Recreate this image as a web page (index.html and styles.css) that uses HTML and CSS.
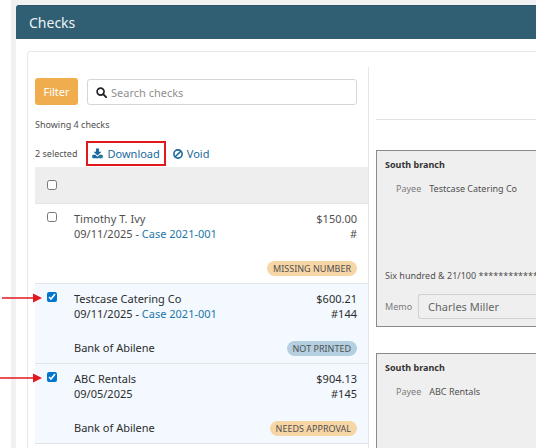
FILE: index.html
```html
<!DOCTYPE html>
<html lang="en">

<head>
    <meta charset="UTF-8">
    <meta name="viewport" content="width=device-width, initial-scale=1.0">
    <title>Checks</title>
    <link rel="stylesheet" href="styles.css">
</head>

<body>

    <div class="page">
        <main class="panel">
            <h1 class="panel-title">Checks</h1>

            <div class="content">
                <!-- list of checks -->
                <section class="list">
                    <div class="search-row">
                        <button type="button" class="filter">Filter</button>
                        <label class="search">
                            <svg class="search-icon" viewBox="0 0 12 12" aria-hidden="true">
                                <circle cx="5" cy="5" r="3.8" fill="none" stroke="currentColor" stroke-width="1.8" />
                                <path d="M7.8 7.8L11 11" stroke="currentColor" stroke-width="2.1" stroke-linecap="round" />
                            </svg>
                            <input type="search" placeholder="Search checks" aria-label="Search checks">
                        </label>
                    </div>

                    <p class="showing">Showing 4 checks</p>

                    <div class="actions">
                        <span class="selected-count">2 selected</span>
                        <button type="button" class="action highlighted">
                            <svg class="download-icon" viewBox="0 0 12 12" aria-hidden="true">
                                <path fill="currentColor" d="M4.3 .6H7.7V4.2H10.4L6 8.3L1.6 4.2H4.3Z" />
                                <path fill="currentColor" fill-rule="evenodd" d="M1.2 7.4H3.8L5.2 8.9Q6 9.6 6.8 8.9L8.2 7.4H10.8Q11.7 7.4 11.7 8.3V10.4Q11.7 11.2 10.8 11.2H1.2Q.3 11.2 .3 10.4V8.3Q.3 7.4 1.2 7.4ZM8 9.5V10.2H8.7V9.5ZM9.6 9.5V10.2H10.3V9.5Z" />
                            </svg>
                            Download
                        </button>
                        <button type="button" class="action">
                            <svg class="void-icon" viewBox="0 0 10 10" aria-hidden="true">
                                <circle cx="5" cy="5" r="4.1" fill="none" stroke="currentColor" stroke-width="1.6" />
                                <path d="M2.2 7.8L7.8 2.2" stroke="currentColor" stroke-width="1.6" />
                            </svg>
                            Void
                        </button>
                    </div>

                    <table class="checks">
                        <thead>
                            <tr>
                                <th class="pick"><input type="checkbox" aria-label="Select all checks"></th>
                                <th></th>
                                <th></th>
                            </tr>
                        </thead>
                        <tbody>
                            <tr>
                                <td class="pick"><input type="checkbox" aria-label="Select Timothy T. Ivy"></td>
                                <td>
                                    <p>Timothy T. Ivy</p>
                                    <p>09/11/2025 - <a href="#case">Case 2021-001</a></p>
                                </td>
                                <td class="amount">
                                    <p>$150.00</p>
                                    <p>#</p>
                                    <span class="badge warning">MISSING NUMBER</span>
                                </td>
                            </tr>
                            <tr class="checked">
                                <td class="pick">
                                    <svg class="arrow" viewBox="0 0 42 10" aria-hidden="true">
                                        <path d="M2 5H35" stroke="#e0191f" stroke-width="1.6" />
                                        <path d="M33 .6L42 5L33 9.4Z" fill="#e0191f" />
                                    </svg>
                                    <input type="checkbox" checked aria-label="Select Testcase Catering Co">
                                </td>
                                <td>
                                    <p>Testcase Catering Co</p>
                                    <p>09/11/2025 - <a href="#case">Case 2021-001</a></p>
                                    <p class="bank">Bank of Abilene</p>
                                </td>
                                <td class="amount">
                                    <p>$600.21</p>
                                    <p>#144</p>
                                    <span class="badge info">NOT PRINTED</span>
                                </td>
                            </tr>
                            <tr class="checked">
                                <td class="pick">
                                    <svg class="arrow" viewBox="0 0 42 10" aria-hidden="true">
                                        <path d="M0 5H35" stroke="#e0191f" stroke-width="1.6" />
                                        <path d="M33 .6L42 5L33 9.4Z" fill="#e0191f" />
                                    </svg>
                                    <input type="checkbox" checked aria-label="Select ABC Rentals">
                                </td>
                                <td>
                                    <p>ABC Rentals</p>
                                    <p>09/05/2025</p>
                                    <p class="bank">Bank of Abilene</p>
                                </td>
                                <td class="amount">
                                    <p>$904.13</p>
                                    <p>#145</p>
                                    <span class="badge warning">NEEDS APPROVAL</span>
                                </td>
                            </tr>
                        </tbody>
                    </table>
                </section>

                <!-- check previews -->
                <section class="previews">
                    <div class="toolbar"></div>

                    <article class="check">
                        <h2>South branch</h2>
                        <p class="payee"><span>Payee</span> Testcase Catering Co</p>
                        <p class="words">Six hundred &amp; 21/100 ************</p>
                        <div class="memo">
                            <label for="memo">Memo</label>
                            <input type="text" id="memo" value="Charles Miller" readonly>
                        </div>
                    </article>

                    <article class="check">
                        <h2>South branch</h2>
                        <p class="payee"><span>Payee</span> ABC Rentals</p>
                    </article>
                </section>
            </div>
        </main>
    </div>

</body>

</html>
```
FILE: styles.css
```css
* {
    margin: 0;
    padding: 0;
    box-sizing: border-box;
}

body {
    background: white;
    color: #505050;
    font-family: "Noto Sans", "Open Sans", sans-serif;
    font-size: 11px;
    line-height: 15px;
}

button,
input {
    font: inherit;
    color: inherit;
}

a {
    color: #2377a8;
    text-decoration: none;
}

.page {
    display: flex;
    height: 100vh;
    padding: 5px 0 0 16px;
    background: linear-gradient(to right, white 11px, #f1f1f1 11px);
    overflow: hidden;
}

.panel {
    flex: 1;
    display: flex;
    flex-direction: column;
    min-width: 0;
    background: white;
    border-top-left-radius: 3px;
}

.panel-title {
    padding: 7px 13px;
    background: #305e73;
    border-top: 1px solid #28556a;
    border-top-left-radius: 3px;
    color: #eef3f5;
    font-size: 14px;
    font-weight: 400;
    line-height: 19px;
}

.content {
    flex: 1;
    display: flex;
    min-height: 0;
    margin: 12px 0 0 11px;
    padding: 15px 0 0 7px;
    border: 1px solid #e7e7e7;
    border-width: 1px 0 0 1px;
    border-top-left-radius: 3px;
}

.list {
    flex: 0 0 334px;
    padding-top: 11px;
    border-right: 1px solid #e7e7e7;
}

.search-row {
    display: flex;
    gap: 9px;
    padding-right: 11px;
}

.filter {
    width: 43px;
    height: 27px;
    background: #f0ad4e;
    border: none;
    border-radius: 3px;
    color: white;
    cursor: pointer;
}

.search {
    flex: 1;
    display: flex;
    align-items: center;
    gap: 4px;
    height: 26px;
    margin-top: 1px;
    padding-left: 8px;
    border: 1px solid #d6d6d6;
    border-radius: 3px;
}

.search input {
    flex: 1;
    border: none;
    outline: none;
    background: none;
}

.search input::placeholder {
    color: #909090;
}

.search-icon {
    width: 11px;
    height: 11px;
    color: #222;
}

.showing {
    margin-top: 12px;
    font-size: 9px;
}

.actions {
    display: flex;
    align-items: center;
    gap: 15px;
    height: 27px;
    margin-top: 8px;
}

.selected-count {
    font-size: 9px;
}

.action {
    display: flex;
    align-items: center;
    gap: 4px;
    position: relative;
    background: none;
    border: none;
    color: #1a699e;
    cursor: pointer;
}

.action + .action {
    margin-left: -2px;
}

.download-icon {
    width: 11px;
    height: 11px;
}

.void-icon {
    width: 10px;
    height: 10px;
}

/* red frame around the action to click */
.highlighted::after {
    content: "";
    position: absolute;
    inset: -5px -6px;
    border: 2px solid #e0191f;
}

.checks {
    width: 100%;
    border-collapse: separate;
    border-spacing: 0;
}

.checks th {
    height: 37px;
    background: #eeeeee;
    border-bottom: 1px solid #e4e4e4;
    text-align: left;
}

.checks td {
    height: 80px;
    padding-top: 7px;
    border-bottom: 1px solid #dfe4e7;
    vertical-align: top;
}

.checks .checked td {
    background: #f3f9fe;
    color: #2d2d2d;
}

.checks .pick {
    position: relative;
    width: 39px;
    padding-left: 12px;
}

.checks td.pick {
    padding-top: 8px;
}

.pick input {
    display: block;
    width: 10px;
    height: 10px;
    accent-color: #0075d0;
}

.arrow {
    position: absolute;
    top: 9px;
    left: -35px;
    width: 42px;
    height: 10px;
}

.bank {
    margin-top: 19px;
}

.checks .amount {
    padding-right: 11px;
    text-align: right;
}

.checks .badge {
    display: inline-block;
    margin-top: 20px;
    padding: 0 6px;
    border-radius: 8px;
    font-size: 9px;
    color: #505050;
}

.warning {
    background: #f7d6a6;
}

.info {
    background: #b3cfe0;
}

.previews {
    flex: 1;
    min-width: 0;
    padding-left: 7px;
    font-size: 9px;
}

.toolbar {
    height: 53px;
    margin-bottom: 30px;
    border-bottom: 1px solid #e2e2e2;
}

.check {
    height: 177px;
    margin-bottom: 26px;
    padding: 6px 0 0 8px;
    background: #efefef;
    border: 1px solid #8a8a8a;
    border-right: none;
    overflow: hidden;
}

.check h2 {
    color: #333;
    font-size: 9px;
    font-weight: 700;
    line-height: 15px;
}

.payee {
    display: flex;
    gap: 8px;
    margin: 9px 0 0 11px;
}

.payee span,
.memo label {
    color: #7c7c7c;
}

.words {
    margin-top: 72px;
    white-space: nowrap;
}

.memo {
    display: flex;
    align-items: center;
    gap: 6px;
    margin-top: 11px;
}

.memo input {
    flex: 1;
    min-width: 0;
    height: 25px;
    padding-left: 9px;
    background: none;
    border: 1px solid #d2d2d2;
    border-right: none;
    border-radius: 3px 0 0 3px;
    color: #666;
    font-size: 11px;
}
```
